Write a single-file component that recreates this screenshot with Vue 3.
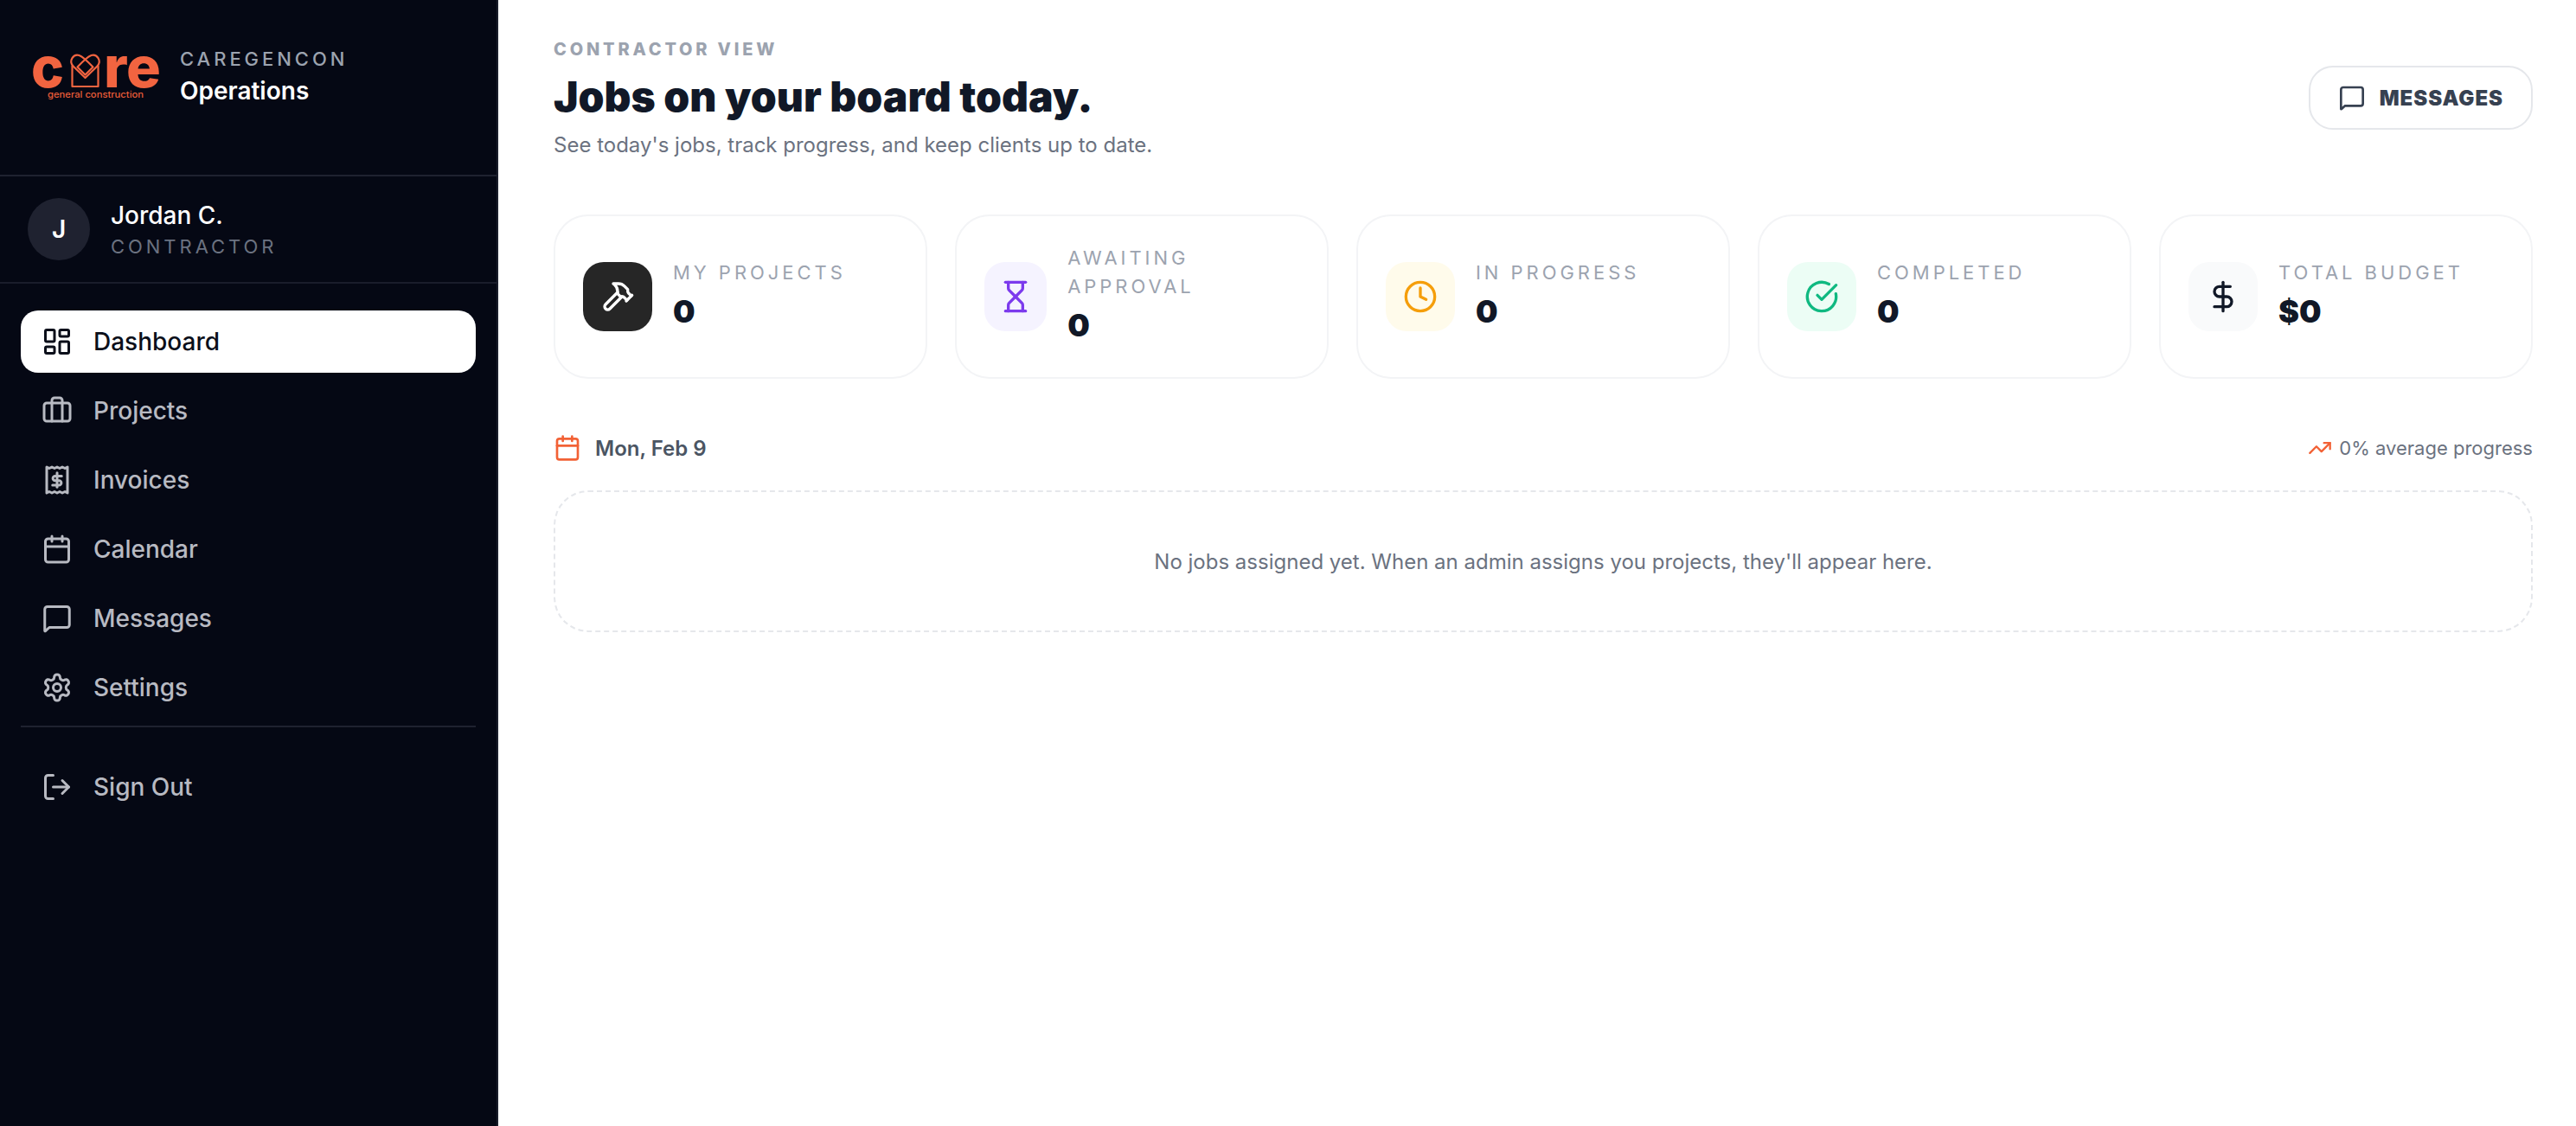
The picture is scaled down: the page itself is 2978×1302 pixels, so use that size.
<template>
  <div class="layout">
    <aside class="sidebar">
      <div class="brand">
        <svg class="logo" viewBox="0 0 150 56" aria-label="Core general construction">
          <text x="-1" y="39" class="logo-word" textLength="38" lengthAdjust="spacingAndGlyphs">c</text>
          <g fill="none" stroke="#f26440" stroke-width="2.2" stroke-linejoin="round">
            <path d="M46.500 14V38H76.500V14" />
            <path d="M46.500 13.500L61.500 28L76.500 13.500" />
            <path d="M47.500 14.500C42 8 48 0 54.500 2C58.500 3.500 62 6.500 70.500 15.500L61.500 24.500L52.500 15.500C61 6.500 64.500 3.500 68.500 2C75 0 81 8 75.500 14.500" />
          </g>
          <text x="83" y="39" class="logo-word" textLength="66" lengthAdjust="spacingAndGlyphs">re</text>
          <text x="18" y="50.500" class="logo-sub" textLength="111" lengthAdjust="spacingAndGlyphs">general construction</text>
        </svg>
        <div class="brand-text">
          <span class="brand-top">CAREGENCON</span>
          <span class="brand-name">Operations</span>
        </div>
      </div>

      <div class="user">
        <div class="avatar">J</div>
        <div class="user-text">
          <span class="user-name">Jordan C.</span>
          <span class="user-role">CONTRACTOR</span>
        </div>
      </div>

      <nav class="nav">
        <a v-for="item in navItems" :key="item.label" class="nav-item" :class="{ active: item.active }">
          <svg class="nav-icon" viewBox="0 0 24 24" v-html="item.icon"></svg>
          <span>{{ item.label }}</span>
        </a>
        <div class="nav-sep"></div>
        <a class="nav-item signout">
          <svg class="nav-icon" viewBox="0 0 24 24" v-html="icons.logout"></svg>
          <span>Sign Out</span>
        </a>
      </nav>
    </aside>

    <main class="main">
      <header class="head">
        <div>
          <p class="eyebrow">CONTRACTOR VIEW</p>
          <h1>Jobs on your board today.</h1>
          <p class="sub">See today's jobs, track progress, and keep clients up to date.</p>
        </div>
        <button class="msg-btn">
          <svg class="msg-icon" viewBox="0 0 24 24" v-html="icons.message"></svg>
          MESSAGES
        </button>
      </header>

      <section class="stats">
        <div v-for="stat in stats" :key="stat.label" class="stat">
          <div class="stat-icon" :class="stat.tone">
            <svg viewBox="0 0 24 24" v-html="stat.icon"></svg>
          </div>
          <div class="stat-text">
            <div class="stat-label">{{ stat.label }}</div>
            <div class="stat-value">{{ stat.value }}</div>
          </div>
        </div>
      </section>

      <div class="day-row">
        <div class="day">
          <svg class="day-icon" viewBox="0 0 24 24" v-html="icons.calendar"></svg>
          <span>Mon, Feb 9</span>
        </div>
        <div class="progress">
          <svg class="trend-icon" viewBox="0 0 24 24" v-html="icons.trend"></svg>
          <span>0% average progress</span>
        </div>
      </div>

      <div class="empty">No jobs assigned yet. When an admin assigns you projects, they'll appear here.</div>
    </main>
  </div>
</template>

<script setup>
const icons = {
  dashboard: '<rect x="3" y="3" width="7" height="9" rx="1"/><rect x="14" y="3" width="7" height="5" rx="1"/><rect x="14" y="12" width="7" height="9" rx="1"/><rect x="3" y="16" width="7" height="5" rx="1"/>',
  briefcase: '<path d="M16 20V4a2 2 0 0 0-2-2h-4a2 2 0 0 0-2 2v16"/><rect x="2" y="6" width="20" height="14" rx="2"/>',
  invoice: '<path d="M4 22V2l2 1 2-1 2 1 2-1 2 1 2-1 2 1 2-1v20l-2-1-2 1-2-1-2 1-2-1-2 1-2-1-2 1z"/><path d="M12 6.500v11"/><path d="M15.500 9h-5a1.750 1.750 0 0 0 0 3.500h3a1.750 1.750 0 0 1 0 3.500h-5"/>',
  calendar: '<path d="M8 2v4"/><path d="M16 2v4"/><rect x="3" y="4" width="18" height="18" rx="2"/><path d="M3 10h18"/>',
  message: '<path d="M2.500 5a2 2 0 0 1 2-2h15a2 2 0 0 1 2 2v12a2 2 0 0 1-2 2H6l-3 2.800a.3.3 0 0 1-.5-.2z"/>',
  settings: '<path d="M12.220 2h-.44a2 2 0 0 0-2 2v.18a2 2 0 0 1-1 1.730l-.43.25a2 2 0 0 1-2 0l-.15-.08a2 2 0 0 0-2.730.73l-.22.38a2 2 0 0 0 .73 2.730l.15.1a2 2 0 0 1 1 1.720v.51a2 2 0 0 1-1 1.740l-.15.09a2 2 0 0 0-.73 2.730l.22.38a2 2 0 0 0 2.730.73l.15-.08a2 2 0 0 1 2 0l.43.25a2 2 0 0 1 1 1.730V20a2 2 0 0 0 2 2h.44a2 2 0 0 0 2-2v-.18a2 2 0 0 1 1-1.730l.43-.25a2 2 0 0 1 2 0l.15.08a2 2 0 0 0 2.730-.73l.22-.39a2 2 0 0 0-.73-2.730l-.15-.08a2 2 0 0 1-1-1.740v-.5a2 2 0 0 1 1-1.740l.15-.09a2 2 0 0 0 .73-2.730l-.22-.38a2 2 0 0 0-2.730-.73l-.15.08a2 2 0 0 1-2 0l-.43-.25a2 2 0 0 1-1-1.730V4a2 2 0 0 0-2-2z"/><circle cx="12" cy="12" r="3"/>',
  logout: '<path d="M9 21H5a2 2 0 0 1-2-2V5a2 2 0 0 1 2-2h4"/><path d="M16 17l5-5-5-5"/><path d="M21 12H9"/>',
  hammer: '<path d="m15 12-8.373 8.373a1 1 0 1 1-3-3L12 9"/><path d="m18 15 4-4"/><path d="m21.500 11.500-1.914-1.914A2 2 0 0 1 19 8.172V7l-2.260-2.260a6 6 0 0 0-4.202-1.756L9 2.960l.92.82A6.180 6.180 0 0 1 12 8.400V10l2 2h1.172a2 2 0 0 1 1.414.586L18.500 14.500"/>',
  hourglass: '<path d="M5 22h14"/><path d="M5 2h14"/><path d="M17 22v-4.172a2 2 0 0 0-.586-1.414L12 12l-4.414 4.414A2 2 0 0 0 7 17.828V22"/><path d="M7 2v4.172a2 2 0 0 0 .586 1.414L12 12l4.414-4.414A2 2 0 0 0 17 6.172V2"/>',
  clock: '<circle cx="12" cy="12" r="10"/><path d="M12 6v6l4 2"/>',
  check: '<path d="M21.801 10A10 10 0 1 1 17 3.335"/><path d="m9 11 3 3L22 4"/>',
  dollar: '<path d="M12 2v20"/><path d="M17 5H9.500a3.500 3.500 0 0 0 0 7h5a3.500 3.500 0 0 1 0 7H6"/>',
  trend: '<path d="M22 7l-8.500 8.500-5-5L2 17"/><path d="M16 7h6v6"/>'
}

const navItems = [
  { label: 'Dashboard', icon: icons.dashboard, active: true },
  { label: 'Projects', icon: icons.briefcase },
  { label: 'Invoices', icon: icons.invoice },
  { label: 'Calendar', icon: icons.calendar },
  { label: 'Messages', icon: icons.message },
  { label: 'Settings', icon: icons.settings }
]

const stats = [
  { label: 'My Projects', value: '0', icon: icons.hammer, tone: 'dark' },
  { label: 'Awaiting Approval', value: '0', icon: icons.hourglass, tone: 'violet' },
  { label: 'In Progress', value: '0', icon: icons.clock, tone: 'amber' },
  { label: 'Completed', value: '0', icon: icons.check, tone: 'green' },
  { label: 'Total Budget', value: '$0', icon: icons.dollar, tone: 'gray' }
]
</script>

<style>
html,
body {
  margin: 0;
  background: #fff;
}
</style>

<style scoped>
.layout {
  display: flex;
  height: 100vh;
  overflow: hidden;
  background: #fff;
  font-family: Inter, "Liberation Sans", sans-serif;
}

.sidebar {
  width: 576px;
  flex-shrink: 0;
  box-sizing: border-box;
  background: #050814;
  border-right: 2px solid #1a1d2b;
}

.brand {
  display: flex;
  align-items: center;
  gap: 21px;
  height: 204px;
  box-sizing: border-box;
  padding: 0 36px 25px 37px;
  border-bottom: 2px solid #1f2230;
}

.logo {
  width: 150px;
  height: 56px;
  flex-shrink: 0;
  margin-top: 3px;
  overflow: visible;
}

.logo-word {
  font-size: 66px;
  font-weight: 800;
  fill: #f26440;
}

.logo-sub {
  font-size: 10.500px;
  font-weight: 500;
  fill: #e95c38;
}

.brand-text,
.user-text {
  display: flex;
  flex-direction: column;
}

.brand-top {
  font-size: 22px;
  line-height: 33px;
  font-weight: 500;
  letter-spacing: 0.18em;
  color: #9ca3af;
}

.brand-name {
  font-size: 28px;
  line-height: 40px;
  font-weight: 600;
  color: #fff;
}

.user {
  display: flex;
  align-items: center;
  gap: 24px;
  height: 124px;
  box-sizing: border-box;
  padding: 0 32px;
  border-bottom: 2px solid #1a1d2b;
}

.avatar {
  display: flex;
  align-items: center;
  justify-content: center;
  width: 72px;
  height: 72px;
  border-radius: 50%;
  background: #1f2230;
  color: #fff;
  font-size: 28px;
  font-weight: 600;
}

.user-name {
  font-size: 28px;
  line-height: 40px;
  font-weight: 500;
  color: #fff;
}

.user-role {
  font-size: 22px;
  line-height: 33px;
  letter-spacing: 0.18em;
  color: #6b7280;
}

.nav {
  display: flex;
  flex-direction: column;
  gap: 8px;
  padding: 31px 24px;
}

.nav-item {
  display: flex;
  align-items: center;
  gap: 24px;
  height: 72px;
  padding: 0 24px;
  border-radius: 20px;
  font-size: 28px;
  font-weight: 500;
  color: #b8bac2;
}

.nav-item.active {
  background: #fff;
  color: #0b0f1a;
}

.nav-icon {
  width: 36px;
  height: 36px;
  flex-shrink: 0;
  fill: none;
  stroke: currentColor;
  stroke-width: 2;
  stroke-linecap: round;
  stroke-linejoin: round;
}

.nav-sep {
  height: 2px;
  margin-bottom: 25px;
  background: #1f2230;
}

.main {
  flex: 1;
  min-width: 0;
  padding: 40px 50px 0 64px;
}

.head {
  display: flex;
  align-items: flex-start;
  justify-content: space-between;
}

.eyebrow {
  margin: 0;
  font-size: 20px;
  line-height: 34px;
  font-weight: 800;
  letter-spacing: 0.19em;
  color: #9ca3af;
}

h1 {
  margin: 6px 0 0;
  font-size: 48px;
  line-height: 64px;
  font-weight: 900;
  color: #111827;
}

.sub {
  margin: 4px 0 0;
  font-size: 24px;
  line-height: 40px;
  color: #6b7280;
}

.msg-btn {
  display: flex;
  align-items: center;
  gap: 16px;
  height: 74px;
  margin-top: 36px;
  padding: 0 32px;
  background: #fff;
  border: 2px solid #e5e7eb;
  border-radius: 28px;
  font-family: inherit;
  font-size: 24px;
  font-weight: 900;
  letter-spacing: 0.04em;
  color: #374151;
}

.msg-icon {
  width: 32px;
  height: 32px;
  fill: none;
  stroke: currentColor;
  stroke-width: 2;
  stroke-linecap: round;
  stroke-linejoin: round;
}

.stats {
  display: grid;
  grid-template-columns: repeat(5, 1fr);
  gap: 32px;
  margin-top: 60px;
}

.stat {
  display: flex;
  align-items: center;
  gap: 24px;
  height: 190px;
  box-sizing: border-box;
  padding: 32px;
  background: #fff;
  border: 2px solid #f3f4f6;
  border-radius: 40px;
}

.stat-icon {
  display: flex;
  align-items: center;
  justify-content: center;
  width: 80px;
  height: 80px;
  border-radius: 24px;
}

.stat-icon svg {
  width: 40px;
  height: 40px;
  fill: none;
  stroke: currentColor;
  stroke-width: 2;
  stroke-linecap: round;
  stroke-linejoin: round;
}

.dark {
  background: #262626;
  color: #fff;
}

.violet {
  background: #f5f3ff;
  color: #7c3aed;
}

.amber {
  background: #fffbeb;
  color: #f59e0b;
}

.green {
  background: #ecfdf5;
  color: #10b981;
}

.gray {
  background: #f9fafb;
  color: #111827;
}

.stat-text {
  padding-bottom: 4px;
}

.stat-label {
  font-size: 22px;
  line-height: 33px;
  letter-spacing: 0.18em;
  text-transform: uppercase;
  color: #9ca3af;
}

.stat-value {
  margin-top: 4px;
  font-size: 36px;
  line-height: 48px;
  font-weight: 900;
  color: #111827;
}

.day-row {
  display: flex;
  align-items: center;
  justify-content: space-between;
  margin-top: 64px;
}

.day {
  display: flex;
  align-items: center;
  gap: 16px;
  font-size: 24px;
  font-weight: 600;
  color: #4b5563;
}

.day-icon {
  width: 32px;
  height: 32px;
  fill: none;
  stroke: #f26135;
  stroke-width: 2;
  stroke-linecap: round;
  stroke-linejoin: round;
}

.progress {
  display: flex;
  align-items: center;
  gap: 8px;
  font-size: 22px;
  color: #6b7280;
}

.trend-icon {
  width: 28px;
  height: 28px;
  fill: none;
  stroke: #f26135;
  stroke-width: 2;
  stroke-linecap: round;
  stroke-linejoin: round;
}

.empty {
  display: flex;
  align-items: center;
  justify-content: center;
  height: 164px;
  box-sizing: border-box;
  margin-top: 33px;
  border: 2px dashed #e5e7eb;
  border-radius: 40px;
  font-size: 24px;
  color: #6b7280;
}
</style>
